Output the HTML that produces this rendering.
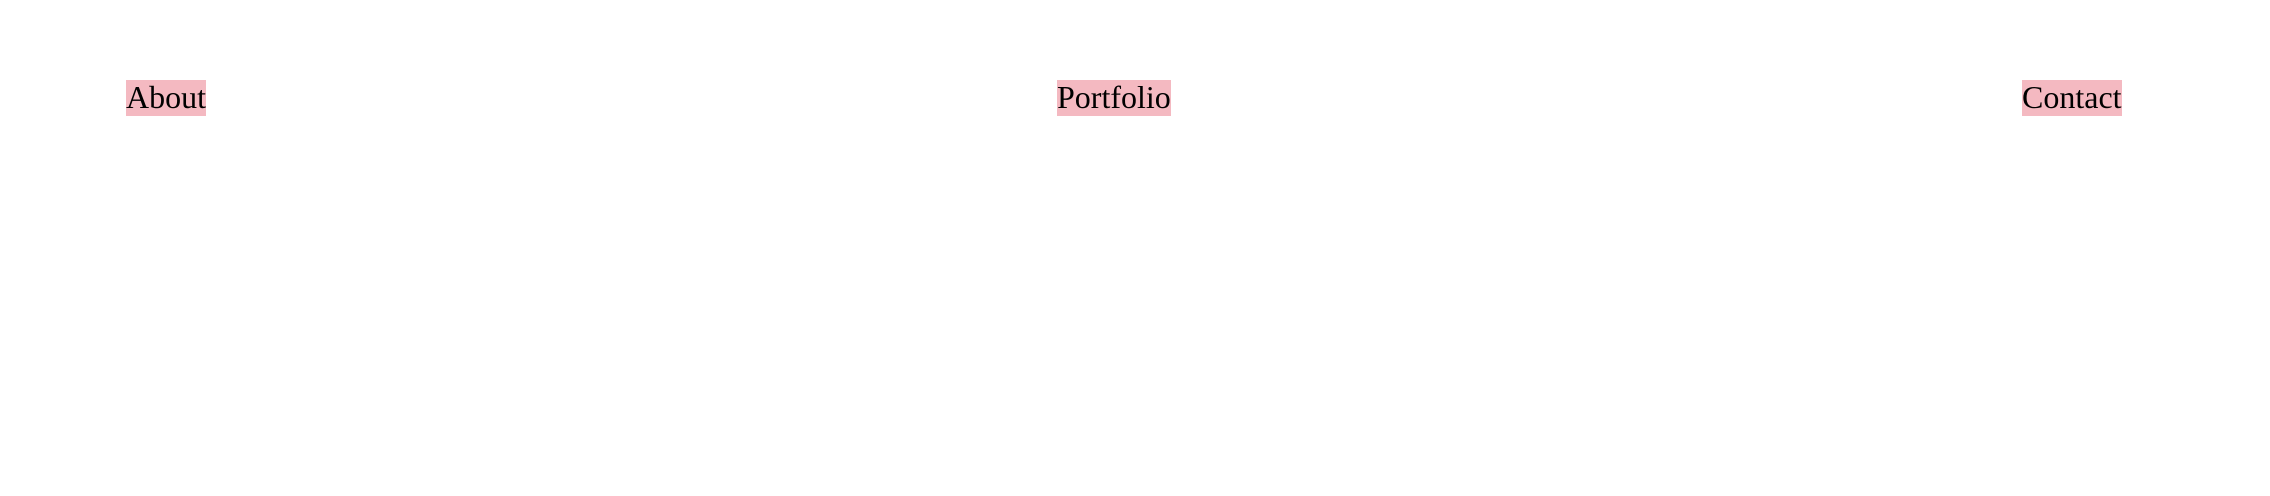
<!DOCTYPE html>
<html><head><meta charset="utf-8"><style>
html,body{margin:0;padding:0;width:2270px;height:496px;background:#fff;overflow:hidden}
span{position:absolute;top:80px;font-family:"Liberation Serif",serif;font-size:32px;line-height:34px;height:34px;padding-bottom:2px;background:#f4b9c1;color:#000;white-space:nowrap}
</style></head><body>
<span style="left:126px">About</span>
<span style="left:1057px">Portfolio</span>
<span style="left:2022px">Contact</span>
</body></html>
